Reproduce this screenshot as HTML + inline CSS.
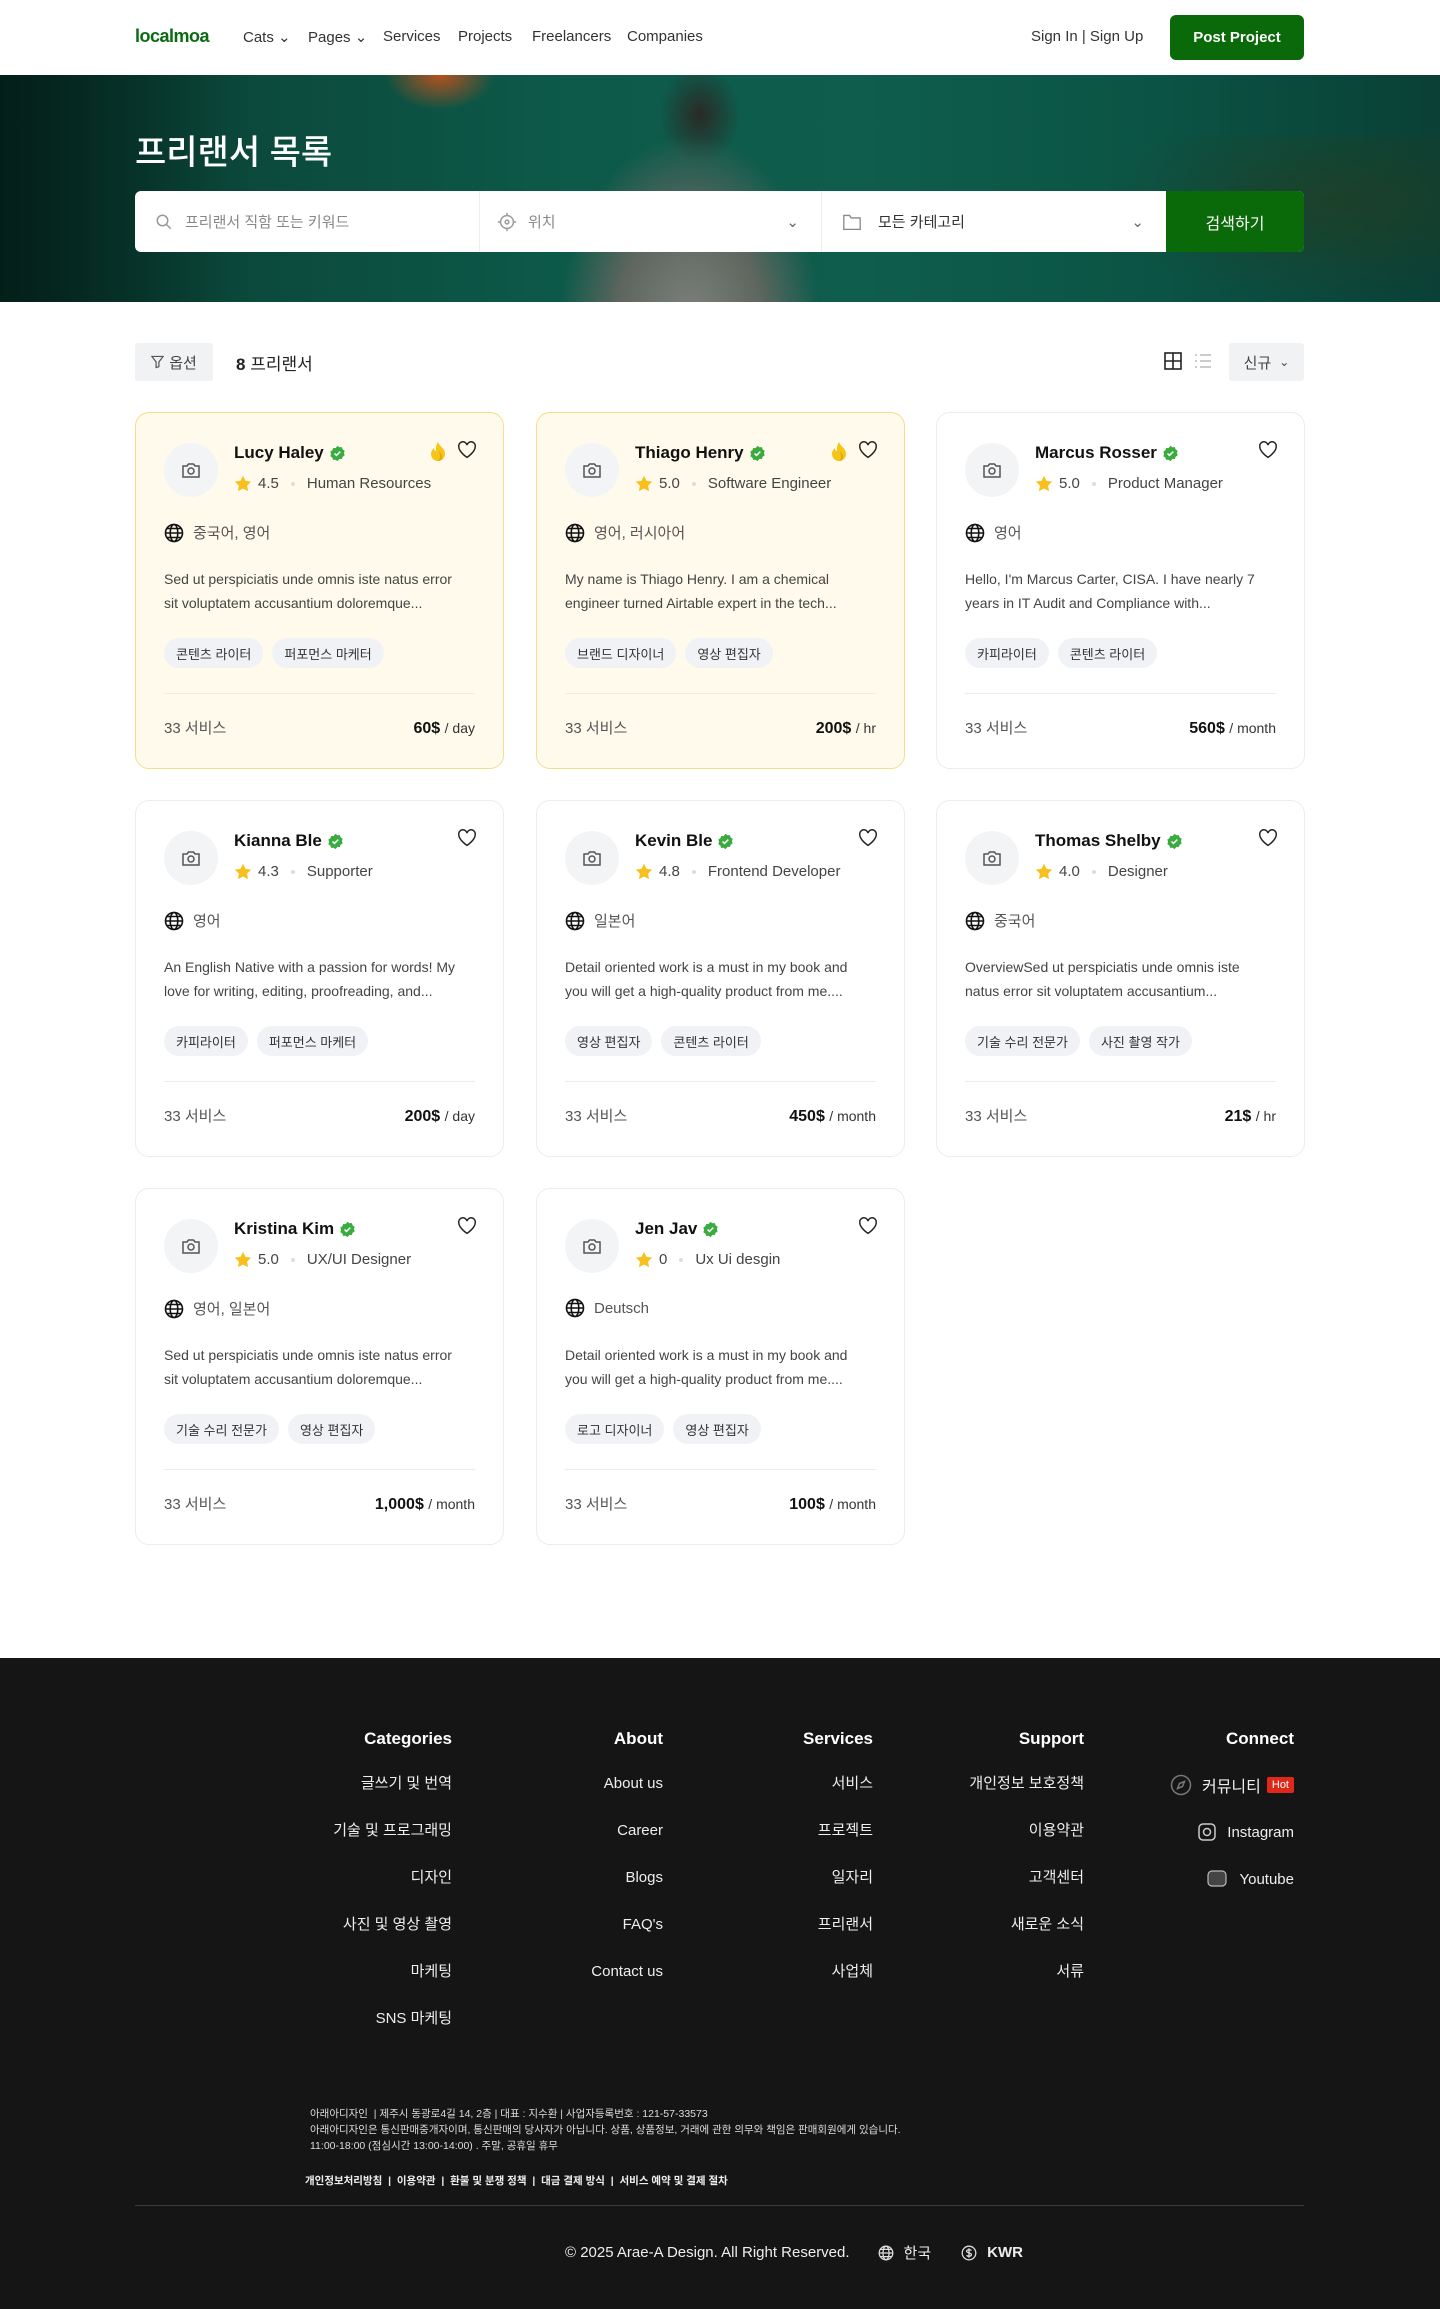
<!DOCTYPE html>
<html><head><meta charset="utf-8"><style>
*{box-sizing:border-box;margin:0;padding:0}
body{width:1440px;height:2309px;font-family:"Liberation Sans","Noto Sans CJK KR",sans-serif;background:#fff;color:#222;position:relative;overflow:hidden}
.abs{position:absolute}
.nav a{position:absolute;top:28px;font-size:15px;color:#333;text-decoration:none;white-space:nowrap}
.hero{position:absolute;top:75px;left:0;width:1440px;height:227px;overflow:hidden;
background:
radial-gradient(ellipse 130px 190px at 690px 250px,#7d837c 0%,#5f665f 55%,rgba(60,70,65,0) 100%),
radial-gradient(ellipse 40px 50px at 700px 40px,#2a2a26 0%,rgba(30,30,30,0) 100%),
radial-gradient(ellipse 55px 35px at 440px 0px,#b5521f 0%,rgba(190,80,30,0) 100%),
linear-gradient(90deg,#062a22 0%,#0b4a3c 18%,#0d5a4a 40%,#0f5d4d 60%,#0b5445 80%,#0a4036 100%)}
.search{position:absolute;top:191px;left:135px;width:1169px;height:61px;background:#fff;border-radius:6px;overflow:hidden;display:flex}
.search div{height:61px;display:flex;align-items:center;font-size:15px;color:#888;position:relative}
.card{position:absolute;width:369px;height:357px;border:1px solid #ececec;border-radius:14px;background:#fff}
.card.f{background:#fffaeb;border-color:#f7dc8a}
.av{position:absolute;left:28px;top:30px;width:54px;height:54px;border-radius:50%;background:#f3f4f6;display:flex;align-items:center;justify-content:center}
.name{position:absolute;left:98px;top:30px;font-size:17px;font-weight:bold;color:#111;display:flex;align-items:center;gap:5px;white-space:nowrap}
.rate{position:absolute;left:98px;top:62px;font-size:15px;color:#444;display:flex;align-items:center;white-space:nowrap}
.rate .dot{display:inline-block;width:4px;height:4px;border-radius:50%;background:#ddd;margin:0 12px}
.heart{position:absolute;right:26px;top:28px}
.fire{position:absolute;right:56px;top:28px}
.lang{position:absolute;left:28px;top:109px;font-size:15px;color:#555;display:flex;align-items:center;gap:9px}
.desc{position:absolute;left:28px;top:154px;font-size:14px;line-height:24px;color:#444;white-space:nowrap}
.tags{position:absolute;left:28px;top:225px;display:flex;gap:9px}
.tags span{background:#f1f2f5;border-radius:15px;height:30px;padding:0 12px;font-size:13px;color:#333;display:flex;align-items:center}
.hr{position:absolute;left:28px;right:28px;top:280px;border-top:1px solid #ececec}
.foot{position:absolute;left:28px;right:28px;top:304px;font-size:15px;color:#555;display:flex;justify-content:space-between;align-items:baseline}
.foot b{color:#111;font-size:16px}.foot b small{font-weight:normal;font-size:14px;color:#333}
.fc{position:absolute;top:1729px;text-align:right;color:#fff}
.fc h4{font-size:17px;font-weight:bold;margin-bottom:22px;height:22px}
.fc p{font-size:15px;height:47px;line-height:22px;color:#eee}
.fc .cn{display:flex;justify-content:flex-end;align-items:center;font-size:15px;color:#eee}
</style></head><body>
<div class="nav">
<div class="abs" style="left:135px;top:26px;font-size:18px;font-weight:bold;color:#0a6b12;letter-spacing:-0.5px">localmoa</div>
<a style="left:243px">Cats ⌄</a><a style="left:308px">Pages ⌄</a><a style="left:383px">Services</a><a style="left:458px">Projects</a><a style="left:532px">Freelancers</a><a style="left:627px">Companies</a>
<a style="left:1031px">Sign In | Sign Up</a>
<div class="abs" style="left:1170px;top:15px;width:134px;height:45px;background:#0a6a0a;border-radius:6px;color:#fff;font-size:15px;font-weight:bold;display:flex;align-items:center;justify-content:center">Post Project</div>
</div>
<div class="hero">
<div class="abs" style="left:0;top:0;width:230px;height:227px;background:linear-gradient(90deg,rgba(0,20,15,.5),rgba(0,0,0,0))"></div>
<div class="abs" style="left:1100px;top:60px;width:340px;height:167px;background:radial-gradient(ellipse at 70% 40%,rgba(40,60,30,.6),rgba(0,0,0,0) 70%)"></div>
<div class="abs" style="left:135px;top:50px;font-size:34px;color:#fff;font-weight:500">프리랜서 목록</div>
</div>
<div class="search">
<div style="width:345px;padding-left:20px;border-right:1px solid #eee"><svg width="18" height="18" viewBox="0 0 24 24" fill="none" stroke="#999" stroke-width="2"><circle cx="10" cy="10" r="7"/><path d="M15 15l6 6"/></svg><span style="margin-left:12px">프리랜서 직함 또는 키워드</span></div>
<div style="width:342px;padding-left:16px;border-right:1px solid #eee"><svg width="22" height="22" viewBox="0 0 24 24" fill="none" stroke="#999" stroke-width="1.6"><circle cx="12" cy="12" r="7"/><circle cx="12" cy="12" r="2"/><path d="M12 2v3M12 19v3M2 12h3M19 12h3"/></svg><span style="margin-left:10px">위치</span><span style="position:absolute;right:22px;color:#666">⌄</span></div>
<div style="width:344px;padding-left:20px;color:#333"><svg width="20" height="18" viewBox="0 0 24 22" fill="none" stroke="#888" stroke-width="1.6"><path d="M2 3h7l2 3h11v14H2z"/></svg><span style="margin-left:16px">모든 카테고리</span><span style="position:absolute;right:22px;color:#666">⌄</span></div>
<div style="width:138px;background:#0a6a0a;color:#fff;justify-content:center;font-size:16px">검색하기</div>
</div>
<div class="abs" style="left:135px;top:343px;width:78px;height:38px;background:#f1f2f4;border-radius:3px;display:flex;align-items:center;justify-content:center;font-size:15px;color:#444;gap:5px"><svg width="13" height="14" viewBox="0 0 14 14" fill="none" stroke="#555" stroke-width="1.3"><path d="M1 1h12L8.5 7v5l-3 1V7z"/></svg>옵션</div>
<div class="abs" style="left:236px;top:350px;font-size:17px;color:#222"><b>8</b> 프리랜서</div>
<svg class="abs" style="left:1164px;top:352px" width="18" height="18" viewBox="0 0 18 18" fill="none" stroke="#222" stroke-width="1.6"><rect x="1" y="1" width="16" height="16"/><path d="M9 1v16M1 9h16"/></svg>
<svg class="abs" style="left:1194px;top:352px" width="18" height="18" viewBox="0 0 18 18" fill="none" stroke="#bbb" stroke-width="1.5"><path d="M1 3h2M6 3h11M1 9h2M6 9h11M1 15h2M6 15h11"/></svg>
<div class="abs" style="left:1229px;top:343px;width:75px;height:38px;background:#f1f2f4;border-radius:3px;display:flex;align-items:center;justify-content:center;font-size:15px;color:#444;gap:8px">신규 <span style="font-size:12px">⌄</span></div>

<div id="cards"></div>
<script>
const C=[
["Lucy Haley","4.5","Human Resources","중국어, 영어","Sed ut perspiciatis unde omnis iste natus error<br>sit voluptatem accusantium doloremque...",["콘텐츠 라이터","퍼포먼스 마케터"],"60$","day",1],
["Thiago Henry","5.0","Software Engineer","영어, 러시아어","My name is Thiago Henry. I am a chemical<br>engineer turned Airtable expert in the tech...",["브랜드 디자이너","영상 편집자"],"200$","hr",1],
["Marcus Rosser","5.0","Product Manager","영어","Hello, I'm Marcus Carter, CISA. I have nearly 7<br>years in IT Audit and Compliance with...",["카피라이터","콘텐츠 라이터"],"560$","month",0],
["Kianna Ble","4.3","Supporter","영어","An English Native with a passion for words! My<br>love for writing, editing, proofreading, and...",["카피라이터","퍼포먼스 마케터"],"200$","day",0],
["Kevin Ble","4.8","Frontend Developer","일본어","Detail oriented work is a must in my book and<br>you will get a high-quality product from me....",["영상 편집자","콘텐츠 라이터"],"450$","month",0],
["Thomas Shelby","4.0","Designer","중국어","OverviewSed ut perspiciatis unde omnis iste<br>natus error sit voluptatem accusantium...",["기술 수리 전문가","사진 촬영 작가"],"21$","hr",0],
["Kristina Kim","5.0","UX/UI Designer","영어, 일본어","Sed ut perspiciatis unde omnis iste natus error<br>sit voluptatem accusantium doloremque...",["기술 수리 전문가","영상 편집자"],"1,000$","month",0],
["Jen Jav","0","Ux Ui desgin","Deutsch","Detail oriented work is a must in my book and<br>you will get a high-quality product from me....",["로고 디자이너","영상 편집자"],"100$","month",0]];
const xs=[135,536,936],ys=[412,800,1188];
let h='';
C.forEach((c,i)=>{const x=xs[i%3],y=ys[Math.floor(i/3)];
h+=`<div class="card${c[8]?' f':''}" style="left:${x}px;top:${y}px">
<div class="av"><svg width="18" height="16" viewBox="0 0 18 16" fill="none" stroke="#555" stroke-width="1.5"><path d="M1 4h4l1.5-2h5L13 4h4v11H1z"/><circle cx="9" cy="9" r="3"/></svg></div>
<div class="name">${c[0]}<svg width="17" height="17" viewBox="0 0 20 20"><path d="M10 1l2.3 1.7 2.8-.2.9 2.7 2.4 1.5-.8 2.8.8 2.8-2.4 1.5-.9 2.7-2.8-.2L10 19l-2.3-1.7-2.8.2-.9-2.7L1.6 13.3l.8-2.8-.8-2.8L4 6.2l.9-2.7 2.8.2z" fill="#3aab3f"/><path d="M6.5 10l2.3 2.3 4.5-4.5" stroke="#fff" stroke-width="1.8" fill="none"/></svg></div>
<div class="rate"><svg width="18" height="17" viewBox="0 0 24 23"><path d="M12 1l3.4 7 7.6 1-5.5 5.3 1.3 7.6L12 18.3 5.2 21.9l1.3-7.6L1 9l7.6-1z" fill="#f8c01c"/></svg><span style="margin-left:6px">${c[1]}</span><span class="dot"></span><span>${c[2]}</span></div>
${c[8]?'<svg class="fire" width="18" height="22" viewBox="0 0 18 22"><path d="M9 1c1 4 7 6 7 12a7 7 0 0 1-14 0c0-3 2-5 3-6 0 2 1 3 2 3 0-4 0-6 2-9z" fill="#f5c518"/><path d="M10 10c2 2 3 4 3 6a4 4 0 0 1-4 4c3-2 2-6 1-10z" fill="#e9a30c"/></svg>':''}
<svg class="heart" width="20" height="18" viewBox="0 0 24 22" fill="none" stroke="#222" stroke-width="1.8"><path d="M12 20S2 13.5 2 7.2A5 5 0 0 1 12 5a5 5 0 0 1 10 2.2C22 13.5 12 20 12 20z"/></svg>
<div class="lang"><svg width="20" height="20" viewBox="0 0 20 20" fill="none" stroke="#111" stroke-width="1.6"><circle cx="10" cy="10" r="8.5"/><ellipse cx="10" cy="10" rx="3.8" ry="8.5"/><path d="M1.5 10h17M3 5.5h14M3 14.5h14"/></svg>${c[3]}</div>
<div class="desc">${c[4]}</div>
<div class="tags"><span>${c[5][0]}</span><span>${c[5][1]}</span></div>
<div class="hr"></div>
<div class="foot"><span>33 서비스</span><b>${c[6]} <small>/ ${c[7]}</small></b></div>
</div>`});
document.getElementById('cards').innerHTML=h;
</script>

<div class="abs" style="left:0;top:1658px;width:1440px;height:651px;background:#151515"></div>
<div class="fc" style="right:988px"><h4>Categories</h4><p>글쓰기 및 번역</p><p>기술 및 프로그래밍</p><p>디자인</p><p>사진 및 영상 촬영</p><p>마케팅</p><p>SNS 마케팅</p></div>
<div class="fc" style="right:777px"><h4>About</h4><p>About us</p><p>Career</p><p>Blogs</p><p>FAQ's</p><p>Contact us</p></div>
<div class="fc" style="right:567px"><h4>Services</h4><p>서비스</p><p>프로젝트</p><p>일자리</p><p>프리랜서</p><p>사업체</p></div>
<div class="fc" style="right:356px"><h4>Support</h4><p>개인정보 보호정책</p><p>이용약관</p><p>고객센터</p><p>새로운 소식</p><p>서류</p></div>
<div class="fc" style="right:146px"><h4>Connect</h4>
<div class="cn" style="height:24px;margin-bottom:23px"><svg width="22" height="22" viewBox="0 0 22 22" fill="none" stroke="#777" stroke-width="1.5"><circle cx="11" cy="11" r="9.5"/><path d="M14.5 7.5l-2 5-5 2 2-5z"/></svg><span style="margin:0 6px 0 10px;font-size:16px">커뮤니티</span><span style="background:#e0281a;color:#fff;font-size:11px;padding:2px 5px;border-radius:2px">Hot</span></div>
<div class="cn" style="height:24px;margin-bottom:23px"><svg width="20" height="20" viewBox="0 0 20 20" fill="none" stroke="#ccc" stroke-width="1.5"><rect x="2" y="2" width="16" height="16" rx="4"/><circle cx="10" cy="10" r="3.5"/></svg><span style="margin-left:10px">Instagram</span></div>
<div class="cn" style="height:24px"><svg width="20" height="18" viewBox="0 0 20 18"><rect x="1" y="1" width="18" height="15" rx="4" fill="#444" stroke="#bbb" stroke-width="1.2"/></svg><span style="margin-left:12px">Youtube</span></div>
</div>
<div class="abs" style="left:310px;top:2106px;font-size:10.5px;line-height:16px;color:#ddd;white-space:nowrap">아래아디자인 &nbsp;| 제주시 동광로4길 14, 2층 | 대표 : 지수환 | 사업자등록번호 : 121-57-33573<br>아래아디자인은 통신판매중개자이며, 통신판매의 당사자가 아닙니다. 상품, 상품정보, 거래에 관한 의무와 책임은 판매회원에게 있습니다.<br>11:00-18:00 (점심시간 13:00-14:00) . 주말, 공휴일 휴무</div>
<div class="abs" style="left:305px;top:2173px;font-size:10.5px;color:#eee;font-weight:bold;white-space:nowrap">개인정보처리방침 &nbsp;| &nbsp;이용약관 &nbsp;| &nbsp;환불 및 분쟁 정책 &nbsp;| &nbsp;대금 결제 방식 &nbsp;| &nbsp;서비스 예약 및 결제 절차</div>
<div class="abs" style="left:135px;top:2205px;width:1169px;border-top:1px solid #3a3a3a"></div>
<div class="abs" style="left:565px;top:2242px;font-size:15px;color:#eee;display:flex;align-items:center;white-space:nowrap">© 2025 Arae-A Design. All Right Reserved.
<svg style="margin-left:28px" width="16" height="16" viewBox="0 0 20 20" fill="none" stroke="#ddd" stroke-width="1.6"><circle cx="10" cy="10" r="8.5"/><ellipse cx="10" cy="10" rx="3.8" ry="8.5"/><path d="M1.5 10h17M3 5.5h14M3 14.5h14"/></svg><span style="margin-left:10px">한국</span>
<svg style="margin-left:30px" width="16" height="16" viewBox="0 0 20 20" fill="none" stroke="#ddd" stroke-width="1.6"><circle cx="10" cy="10" r="8.5"/><path d="M13 7c-1-1.5-6-1.5-6 .8S13 9.5 13 12s-5 2.5-6 .8M10 4v12"/></svg><span style="margin-left:10px;font-weight:bold">KWR</span></div>
</body></html>
